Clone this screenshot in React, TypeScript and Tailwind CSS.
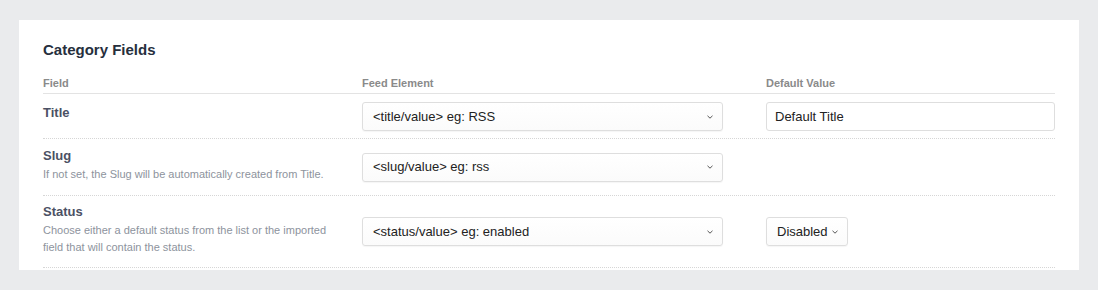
import { ReactNode } from 'react';

const font = { fontFamily: '"Liberation Sans", Arial, Helvetica, sans-serif' };

function Chevron() {
  return (
    <svg width="6" height="4" viewBox="0 0 6 4" className="shrink-0">
      <polyline points="0.5,0.8 3,3.2 5.5,0.8" fill="none" stroke="#555" strokeWidth="1" />
    </svg>
  );
}

function SelectBox({ value, className = '' }: { value: string; className?: string }) {
  return (
    <div
      className={`h-[29px] flex items-center justify-between pl-[10px] pr-[9px] bg-gradient-to-b from-white to-[#fbfbfb] border border-[#dedede] rounded-[3px] shadow-[0_1px_1px_rgba(0,0,0,0.04)] text-[13px] text-[#222] ${className}`}
    >
      <span>{value}</span>
      <Chevron />
    </div>
  );
}

interface RowProps {
  label: string;
  description?: ReactNode;
  labelClass?: string;
  rowClass?: string;
  feed: string;
  children?: ReactNode;
}

function Row({ label, description, labelClass = '', rowClass = 'pt-2 pb-[7px]', feed, children }: RowProps) {
  return (
    <div className={`grid grid-cols-[319px_404px_289px] items-center border-b border-dotted border-[#d6d6d6] ${rowClass}`}>
      <div className={`self-start pb-1 ${labelClass}`}>
        <div className="text-[13px] leading-[18px] font-bold text-[#4b5164]">{label}</div>
        {description && (
          <div className="mt-[1px] text-[11px] leading-[17px] text-[#8d939d] pr-6">{description}</div>
        )}
      </div>
      <div>
        <SelectBox value={feed} className="w-[361px]" />
      </div>
      <div>{children}</div>
    </div>
  );
}

export default function App() {
  return (
    <div className="min-h-screen bg-[#eaebed] pt-5 px-[19px]" style={font}>
      <div className="bg-white w-[1060px] h-[250px] px-6 pt-5">
        <h2 className="text-[15px] leading-[20px] font-bold text-[#262f3d]">Category Fields</h2>

        <div className="mt-[15px] grid grid-cols-[319px_404px_289px] pb-[2px] border-b border-[#e3e3e3] text-[11px] leading-[16px] font-bold text-[#8a8a8a]">
          <div>Field</div>
          <div>Feed Element</div>
          <div>Default Value</div>
        </div>

        <Row label="Title" labelClass="mt-[2px]" feed="<title/value> eg: RSS">
          <div className="h-[29px] flex items-center px-2 border border-[#dedede] rounded-[3px] text-[13px] text-[#222]">
            Default Title
          </div>
        </Row>

        <Row
          label="Slug"
          rowClass="pt-2 pb-[8px]"
          description="If not set, the Slug will be automatically created from Title."
          feed="<slug/value> eg: rss"
        />

        <Row
          label="Status"
          rowClass="pt-[7px] pb-[7px]"
          description="Choose either a default status from the list or the imported field that will contain the status."
          feed="<status/value> eg: enabled"
        >
          <SelectBox value="Disabled" className="w-[82px] pr-[7px]" />
        </Row>
      </div>
    </div>
  );
}
